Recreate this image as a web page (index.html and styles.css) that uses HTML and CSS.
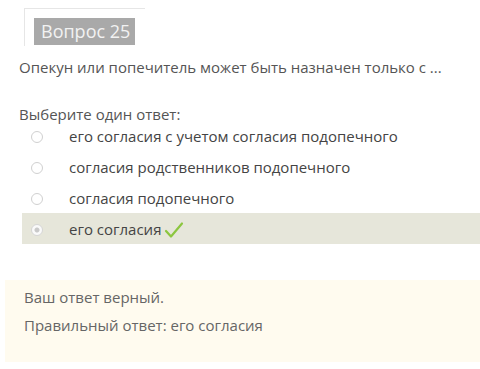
FILE: index.html
```html
<!DOCTYPE html>
<html lang="ru">
<head>
    <meta charset="UTF-8">
    <meta name="viewport" content="width=device-width, initial-scale=1.0">
    <title>Вопрос 25</title>
    <link rel="stylesheet" href="styles.css">
</head>
<body>

    <div class="info">
        <h3 class="qno">Вопрос 25</h3>
    </div>

    <div class="qtext">Опекун или попечитель может быть назначен только с ...</div>

    <div class="prompt">Выберите один ответ:</div>
    <div class="answers">
        <div class="answer">
            <span class="radio"></span>
            <span class="label">его согласия с учетом согласия подопечного</span>
        </div>
        <div class="answer">
            <span class="radio"></span>
            <span class="label">согласия родственников подопечного</span>
        </div>
        <div class="answer">
            <span class="radio"></span>
            <span class="label">согласия подопечного</span>
        </div>
        <div class="answer correct">
            <span class="radio checked"></span>
            <span class="label">его согласия</span>
            <svg class="tick" width="20" height="18" viewBox="0 0 20 18">
                <path d="M2 10 L7 15.5 L18 2.5" fill="none" stroke="#8cc63f" stroke-width="2.2" stroke-linecap="round" stroke-linejoin="round"/>
            </svg>
        </div>
    </div>

    <div class="feedback">
        <div>Ваш ответ верный.</div>
        <div>Правильный ответ: его согласия</div>
    </div>

</body>
</html>
```

FILE: styles.css
```css
body {
    margin: 0;
    background-color: #ffffff;
    color: #555;
    font-family: "Open Sans", "Noto Sans", sans-serif;
    font-size: 15px;
}

.info {
    margin: 8px 0 0 24px;
    width: 111px;
    padding: 9px 0 0 9px;
    border-top: 1px solid #e6e6e6;
    border-left: 1px solid #e6e6e6;
    height: 28px;
}

.qno {
    display: inline-block;
    margin: 0;
    padding: 0 5px 0 7px;
    height: 27px;
    line-height: 27px;
    font-weight: normal;
    font-size: 18px;
    color: #f2f2f2;
    background-color: #a9a9a9;
    white-space: nowrap;
}

.qtext {
    margin: 11px 0 0 19px;
    line-height: 20px;
}

.prompt {
    margin: 27px 0 0 19px;
    line-height: 20px;
}

.answers {
    margin: -4px 0 0 22px;
}

.answer {
    display: flex;
    align-items: center;
    height: 31px;
    color: #444;
}

.radio {
    width: 12px;
    height: 12px;
    border: 1px solid #d0d0d0;
    border-radius: 50%;
    margin: 2px 26px 0 9px;
    box-sizing: border-box;
    background: #fff;
}

.radio.checked {
    background: radial-gradient(circle, #c9c9c9 0 2px, #fafafa 3px);
    border-color: #d6d6d6;
}

.correct {
    background-color: #e6e6da;
}

.tick {
    margin-left: 3px;
    margin-top: 2px;
}

.feedback {
    margin: 36px 0 0 5px;
    padding: 3px 19px 0;
    background-color: #fffbef;
    color: #666;
    line-height: 28px;
    height: 79px;
}
```
